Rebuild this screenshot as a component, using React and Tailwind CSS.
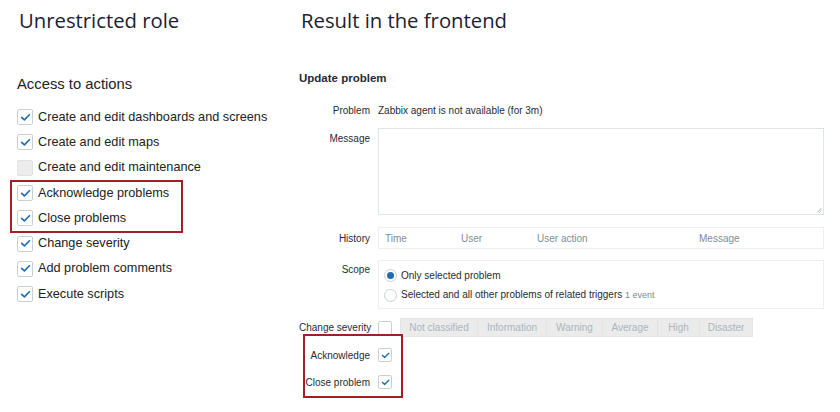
import React from "react";

const Check = ({ disabled = false, checked = true, size = 16 }) => (
  <div
    className={`flex items-center justify-center rounded-[2px] border shrink-0 ${
      disabled ? "bg-[#ececec] border-[#e2e2e2]" : "bg-white border-[#c9d0d4]"
    }`}
    style={{ width: size, height: size }}
  >
    {checked && !disabled && (
      <svg width={size - 5} height={size - 5} viewBox="0 0 12 12" fill="none">
        <path d="M1.8 5.8 L4.8 8.6 L10.3 3" stroke="#1f6cb0" strokeWidth="1.8" strokeLinecap="round" strokeLinejoin="round" />
      </svg>
    )}
  </div>
);

const LeftRow = ({ label, disabled }) => (
  <div className="flex items-center h-[25.3px] pl-[17px] gap-[5px]">
    <Check disabled={disabled} />
    <span className="text-[12.7px] text-[#222]">{label}</span>
  </div>
);

const Label = ({ children, className = "" }) => (
  <div className={`w-[71px] shrink-0 text-right whitespace-nowrap ${className}`}>{children}</div>
);

const Radio = ({ on }) => (
  <div className="w-[13px] h-[13px] rounded-full border border-[#c9d0d4] bg-white flex items-center justify-center shrink-0">
    {on && <div className="w-[7px] h-[7px] rounded-full bg-[#1f6cb0]" />}
  </div>
);

export default function App() {
  const sev = [
    ["Not classified", "w-[77px]"],
    ["Information", "w-[69px]"],
    ["Warning", "w-[56px]"],
    ["Average", "w-[55px]"],
    ["High", "w-[42px]"],
    ["Disaster", "w-[52px]"],
  ];
  return (
    <div className="w-[840px] h-[412px] bg-white flex overflow-hidden font-['Liberation_Sans',Arial,sans-serif]">
      {/* Left column */}
      <div className="w-[299px] shrink-0 flex flex-col">
        <div className="h-[41px] flex items-center pl-[19px] text-[20.3px] text-[#1c2233] font-['Open_Sans','Noto_Sans',sans-serif]">
          Unrestricted role
        </div>
        <div className="mt-[32px] h-[22px] flex items-center pl-[17px] text-[14.8px] text-[#222]">
          Access to actions
        </div>
        <div className="mt-[9.5px] flex flex-col">
          <LeftRow label="Create and edit dashboards and screens" />
          <LeftRow label="Create and edit maps" />
          <LeftRow label="Create and edit maintenance" disabled />
          <div className="relative">
            <LeftRow label="Acknowledge problems" />
            <LeftRow label="Close problems" />
            <div className="absolute left-[10px] w-[173px] top-[0px] bottom-[-2.5px] border-[2.5px] border-[#a51d25]" />
          </div>
          <LeftRow label="Change severity" />
          <LeftRow label="Add problem comments" />
          <LeftRow label="Execute scripts" />
        </div>
      </div>

      {/* Right column */}
      <div className="flex-1 flex flex-col">
        <div className="h-[41px] flex items-center pl-[2px] text-[20.3px] text-[#1c2233] font-['Open_Sans','Noto_Sans',sans-serif]">
          Result in the frontend
        </div>
        <div className="mt-[30px] h-[16px] flex items-center text-[11.5px] font-bold text-[#1f2c33]">
          Update problem
        </div>

        <div className="flex flex-col text-[10px] text-[#1f2c33]">
          {/* Problem */}
          <div className="mt-[15px] h-[16px] flex items-center gap-[8px]">
            <Label>Problem</Label>
            <span>Zabbix agent is not available (for 3m)</span>
          </div>
          {/* Message */}
          <div className="mt-[10px] flex gap-[8px]">
            <Label className="pt-[3px] leading-[16px]">Message</Label>
            <div className="relative w-[446px] h-[87px] border border-[#dfe4e7] bg-white">
              <svg className="absolute right-[1px] bottom-[1px]" width="6" height="6" viewBox="0 0 6 6">
                <path d="M5.5 1 L1 5.5 M5.5 3.5 L3.5 5.5" stroke="#9aa5ab" strokeWidth="0.8" />
              </svg>
            </div>
          </div>
          {/* History */}
          <div className="mt-[12px] flex items-center gap-[8px]">
            <Label>History</Label>
            <div className="w-[446px] h-[22px] border border-[#eceff1] flex items-center pl-[6px] text-[#7d8e97]">
              <span className="w-[76px]">Time</span>
              <span className="w-[76px]">User</span>
              <span className="w-[162px]">User action</span>
              <span>Message</span>
            </div>
          </div>
          {/* Scope */}
          <div className="mt-[11px] flex gap-[8px]">
            <Label className="pt-[2px] leading-[16px]">Scope</Label>
            <div className="w-[446px] h-[49px] border border-[#eceff1] pt-[4px] pl-[5px] flex flex-col">
              <div className="h-[20px] flex items-center gap-[4px]">
                <Radio on />
                <span>Only selected problem</span>
              </div>
              <div className="h-[20px] flex items-center gap-[4px]">
                <Radio />
                <span>
                  Selected and all other problems of related triggers{" "}
                  <span className="text-[9px] text-[#768d99]">1 event</span>
                </span>
              </div>
            </div>
          </div>
          {/* Change severity */}
          <div className="mt-[9px] h-[19px] flex items-center gap-[8px]">
            <Label>Change severity</Label>
            <Check checked={false} size={14} />
            <div className="h-[19px] flex border border-[#dfe4e7] bg-[#ebebeb] text-[#acb6bb]">
              {sev.map(([t, w], i) => (
                <div
                  key={t}
                  className={`${w} h-full flex items-center justify-center ${
                    i < sev.length - 1 ? "border-r border-[#dfe4e7]" : ""
                  }`}
                >
                  {t}
                </div>
              ))}
            </div>
          </div>
          {/* Acknowledge + Close */}
          <div className="relative">
            <div className="mt-[10px] h-[16px] flex items-center gap-[8px]">
              <Label>Acknowledge</Label>
              <Check size={14} />
            </div>
            <div className="mt-[11px] h-[16px] flex items-center gap-[8px]">
              <Label>Close problem</Label>
              <Check size={14} />
            </div>
            <div className="absolute left-[4px] w-[100px] top-[-3px] bottom-[-8px] border-[2.5px] border-[#a51d25]" />
          </div>
        </div>
      </div>
    </div>
  );
}
